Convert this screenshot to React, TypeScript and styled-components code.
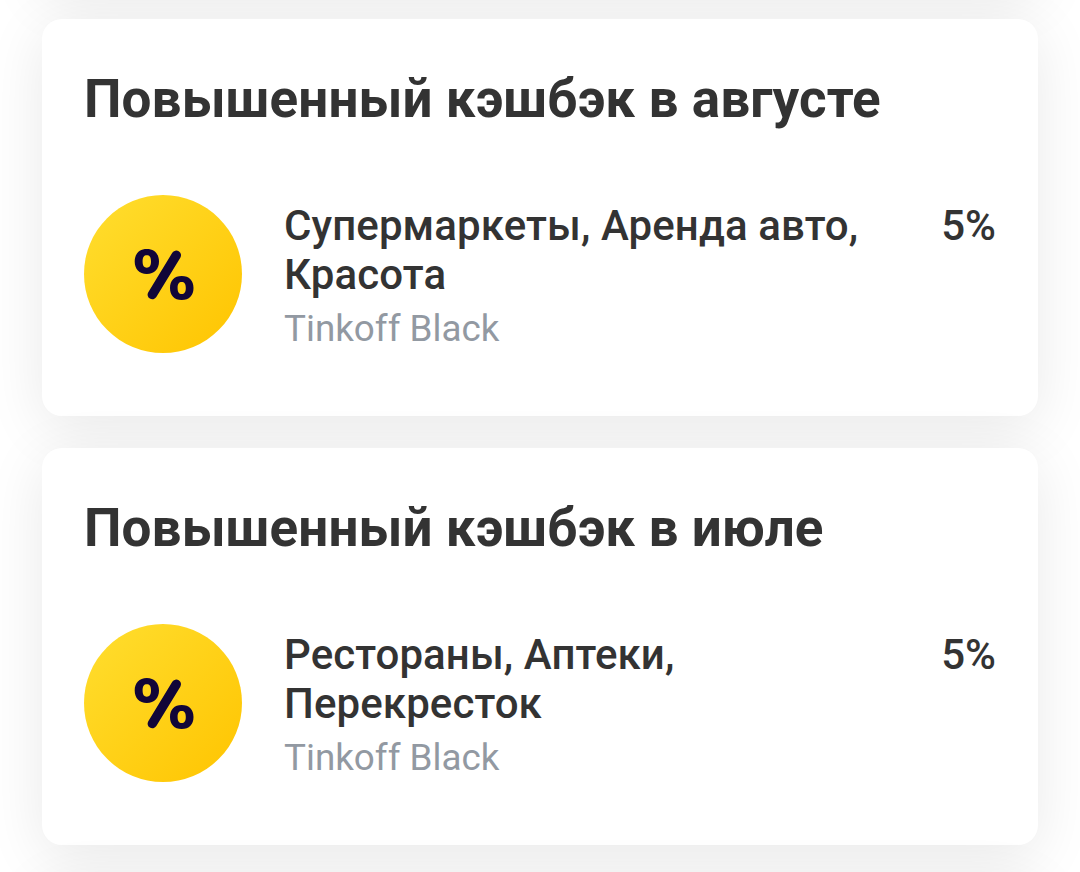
import React from 'react';
import styled, { createGlobalStyle } from 'styled-components';

interface Offer {
  month: string;
  categories: string[];
  card: string;
  percent: string;
}

const offers: Offer[] = [
  {
    month: 'августе',
    categories: ['Супермаркеты, Аренда авто,', 'Красота'],
    card: 'Tinkoff Black',
    percent: '5%',
  },
  {
    month: 'июле',
    categories: ['Рестораны, Аптеки,', 'Перекресток'],
    card: 'Tinkoff Black',
    percent: '5%',
  },
];

const GlobalStyle = createGlobalStyle`
  * {
    box-sizing: border-box;
  }
  body {
    margin: 0;
    background: #fff;
    color: #333;
    font-family: Roboto, sans-serif;
    overflow: hidden;
  }
`;

const Feed = styled.main`
  display: flex;
  flex-direction: column;
  gap: 32px;
  height: 872px;
  padding: 0 42px;
  overflow: hidden;
`;

const Card = styled.section`
  position: relative;
  flex: none;
  height: 397px;
  padding: 49px 42px 0;
  border-radius: 20px;
  background: #fff;
  box-shadow: 0 12px 60px rgba(0, 0, 0, 0.092);
`;

// bottom edge of the card that is scrolled away
const PreviousCard = styled(Card)`
  margin-top: -410px;
`;

const Title = styled.h2`
  margin: 0;
  font-size: 53px;
  font-weight: 700;
  line-height: 62px;
  letter-spacing: 0.1px;
  white-space: nowrap;
`;

const OfferRow = styled.div`
  display: flex;
  margin-top: 65px;
`;

const Badge = styled.div`
  display: flex;
  flex: none;
  align-items: center;
  justify-content: center;
  width: 158px;
  height: 158px;
  border-radius: 50%;
  background: linear-gradient(135deg, #ffdd2d 5%, #ffc400 100%);
`;

const Details = styled.div`
  flex: 1;
  margin-left: 42px;
  padding-top: 6px;
`;

const Category = styled.div`
  font-size: 42px;
  font-weight: 500;
  line-height: 49px;
  letter-spacing: 0.1px;
  white-space: nowrap;
`;

const CardName = styled.div`
  margin-top: 8px;
  color: #9299a2;
  font-size: 36.8px;
  line-height: 44px;
`;

const Percent = styled(Category)`
  padding-top: 6px;
  letter-spacing: 0;
`;

const PercentIcon: React.FC = () => (
  <svg width="158" height="158" viewBox="0 0 158 158" fill="#110538" fillRule="evenodd">
    <path d="M62.8 54C70.5 54 75 59 75 66.5S70.5 79 62.8 79 50.7 74 50.7 66.5 55.2 54 62.8 54ZM62.8 60.3C60 60.3 58.6 62.2 58.6 66.5S60 72.7 62.8 72.7 67 70.8 67 66.5 65.6 60.3 62.8 60.3Z" />
    <path d="M97.7 81C105.2 81 109.5 85.6 109.5 93S105.2 105 97.7 105 86 100.4 86 93 90.3 81 97.7 81ZM97.7 87C95 87 93.6 88.8 93.6 93S95 99 97.7 99 101.8 97.2 101.8 93 100.4 87 97.7 87Z" />
    <path d="M92.3 60.2 68.3 99.6" stroke="#110538" strokeWidth="9.4" strokeLinecap="round" />
  </svg>
);

const App: React.FC = () => (
  <>
    <GlobalStyle />
    <Feed>
      <PreviousCard />
      {offers.map((offer) => (
        <Card key={offer.month}>
          <Title>Повышенный кэшбэк в {offer.month}</Title>
          <OfferRow>
            <Badge>
              <PercentIcon />
            </Badge>
            <Details>
              {offer.categories.map((line) => (
                <Category key={line}>{line}</Category>
              ))}
              <CardName>{offer.card}</CardName>
            </Details>
            <Percent>{offer.percent}</Percent>
          </OfferRow>
        </Card>
      ))}
      <Card />
    </Feed>
  </>
);

export default App;
